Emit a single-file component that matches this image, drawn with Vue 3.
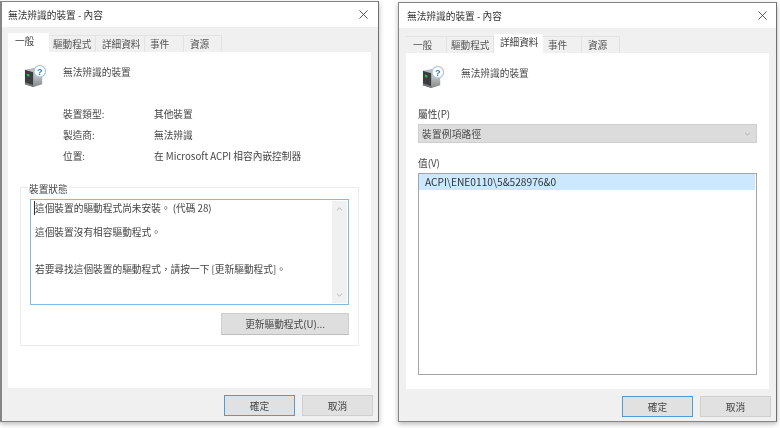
<script setup>
const tabs = ['一般', '驅動程式', '詳細資料', '事件', '資源']
const rows = [
  ['裝置類型:', '其他裝置'],
  ['製造商:', '無法辨識'],
  ['位置:', '在 Microsoft ACPI 相容內嵌控制器'],
]
</script>

<template>
  <div class="desk" lang="zh-Hant">
    <section class="win win-left">
      <header class="title"><span>無法辨識的裝置 - 內容</span><svg class="x" viewBox="0 0 10 10"><path d="M.5.5l9 9M9.5.5l-9 9" /></svg></header>
      <div class="body">
        <nav class="tabs">
          <span v-for="(t, i) in tabs" :key="t" class="tab" :class="[`t${i}`, { on: i === 0 }]">{{ t }}</span>
        </nav>
        <main class="panel panel-a">
          <div class="head">
            <svg class="dev" viewBox="0 0 24 24">
              <defs>
                <linearGradient id="sideA" x1="0" y1="0" x2="0" y2="1"><stop offset="0" stop-color="#dfe1e3" /><stop offset="1" stop-color="#85888b" /></linearGradient>
              </defs>
              <path d="M1 5L10 3l9 2-9 2.5z" fill="#b9bcbe" />
              <path d="M1 5l9 2.5V23l-9-3z" fill="#3b3d40" />
              <path d="M10 7.5L19 5v15l-9 3z" fill="url(#sideA)" />
              <path d="M3 9l2.6.7v2.5L3 11.5z" fill="#22c24a" />
              <path d="M1 18l9 3v2l-9-3z" fill="#77797c" />
              <circle cx="16.5" cy="6.5" r="6" fill="#fff" stroke="#a8c2da" stroke-width="1.1" />
              <text x="16.5" y="10" class="q">?</text>
            </svg>
            <span>無法辨識的裝置</span>
          </div>
          <dl class="props">
            <div v-for="r in rows" :key="r[0]" class="prop"><dt>{{ r[0] }}</dt><dd>{{ r[1] }}</dd></div>
          </dl>
          <div class="group">
            <span class="legend">裝置狀態</span>
            <div class="status">
              <div class="status-text">
                <p class="l1"><i class="caret"></i>這個裝置的驅動程式尚未安裝。&nbsp;(代碼 28)</p>
                <p class="l2">這個裝置沒有相容驅動程式。</p>
                <p class="l3">若要尋找這個裝置的驅動程式，請按一下 [更新驅動程式]。</p>
              </div>
              <div class="scroll">
                <svg viewBox="0 0 8 5"><path d="M1 4l3-3 3 3" /></svg>
                <svg viewBox="0 0 8 5"><path d="M1 1l3 3 3-3" /></svg>
              </div>
            </div>
            <div class="update-row"><button class="btn update">更新驅動程式(U)...</button></div>
          </div>
        </main>
        <footer class="foot">
          <button class="btn ok">確定</button>
          <button class="btn">取消</button>
        </footer>
      </div>
    </section>

    <section class="win win-right">
      <header class="title"><span>無法辨識的裝置 - 內容</span><svg class="x" viewBox="0 0 10 10"><path d="M.5.5l9 9M9.5.5l-9 9" /></svg></header>
      <div class="body">
        <nav class="tabs">
          <span v-for="(t, i) in tabs" :key="t" class="tab" :class="[`t${i}`, { on: i === 2 }]">{{ t }}</span>
        </nav>
        <main class="panel panel-b">
          <div class="head">
            <svg class="dev" viewBox="0 0 24 24">
              <defs>
                <linearGradient id="sideB" x1="0" y1="0" x2="0" y2="1"><stop offset="0" stop-color="#dfe1e3" /><stop offset="1" stop-color="#85888b" /></linearGradient>
              </defs>
              <path d="M1 5L10 3l9 2-9 2.5z" fill="#b9bcbe" />
              <path d="M1 5l9 2.5V23l-9-3z" fill="#3b3d40" />
              <path d="M10 7.5L19 5v15l-9 3z" fill="url(#sideB)" />
              <path d="M3 9l2.6.7v2.5L3 11.5z" fill="#22c24a" />
              <path d="M1 18l9 3v2l-9-3z" fill="#77797c" />
              <circle cx="16.5" cy="6.5" r="6" fill="#fff" stroke="#a8c2da" stroke-width="1.1" />
              <text x="16.5" y="10" class="q">?</text>
            </svg>
            <span>無法辨識的裝置</span>
          </div>
          <label class="lab lab-p">屬性(P)</label>
          <div class="combo"><span>裝置例項路徑</span><svg viewBox="0 0 8 5"><path d="M1 1l3 3 3-3" /></svg></div>
          <label class="lab lab-v">值(V)</label>
          <div class="list"><div class="sel">ACPI\ENE0110\5&amp;528976&amp;0</div></div>
        </main>
        <footer class="foot">
          <button class="btn ok">確定</button>
          <button class="btn">取消</button>
        </footer>
      </div>
    </section>
  </div>
</template>

<style>
html, body { margin: 0; background: #fff; }
</style>

<style scoped>
.desk {
  width: 780px; height: 428px; overflow: hidden; display: flex; align-items: flex-start;
  font-family: "Noto Sans CJK TC", "Liberation Sans", sans-serif; font-size: 9.7px; color: #444;
  background: #fff; filter: blur(.35px);
}
.win {
  box-sizing: border-box; width: 379px; display: flex; flex-direction: column;
  background: #f0f0f0; border: 1px solid #858585; border-right-color: #6e6e6e;
  box-shadow: 0 2px 5px rgba(0, 0, 0, .28);
}
.win-left { margin-top: 1px; height: 421px; border-left-width: 2px; }
.win-right { margin: 2px 0 0 19px; height: 420px; }
.title {
  flex: none; height: 25px; background: #fff; display: flex; align-items: center; justify-content: space-between;
  padding: 0 10px 0 6px; color: #333;
}
.win-right .title { padding: 0 9px 0 8px; }
.x { width: 9px; height: 9px; fill: none; stroke: #333; stroke-width: .9; }
.body { flex: 1; display: flex; flex-direction: column; padding: 7px 7px 5px 6px; min-height: 0; }
.win-right .body { padding: 7px 7px 4px 7px; }
.tabs { flex: none; height: 18px; display: flex; align-items: flex-end; color: #555; }
.tab {
  box-sizing: border-box; height: 17px; background: #f0f0f0; border: 1px solid #e3e3e3; border-bottom: 0; border-left: 0;
  display: flex; align-items: center; white-space: nowrap; letter-spacing: -.1px;
}
.t0 { width: 41px; padding-left: 7px; }
.t1 { width: 47px; padding-left: 4px; }
.t2 { width: 49px; padding-left: 6px; }
.t3 { width: 39px; padding-left: 5px; }
.t4 { width: 38px; padding-left: 6px; }
.tab.on { height: 19px; background: #fff; border: 0; color: #444; align-items: flex-start; padding-top: 1px; }
.panel { flex: 1; background: #fff; min-height: 0; box-sizing: border-box; padding: 13px 12px 0; display: flex; flex-direction: column; }
.head { display: flex; align-items: flex-start; height: 23px; padding-left: 4px; line-height: 14px; color: #4a4a4a; }
.head span { margin-left: 16px; }
.dev { width: 23px; height: 23px; flex: none; overflow: visible; }
.q { font: bold 9.5px "Liberation Sans", sans-serif; fill: #2f7fd3; text-anchor: middle; }
.props { margin: 19px 0 0 43px; display: flex; flex-direction: column; gap: 7px; }
.prop { display: flex; height: 14px; line-height: 14px; }
.prop dt { width: 91px; }
.prop dd { margin: 0; }
.group {
  position: relative; box-sizing: border-box; margin-top: 24px; width: 339px; height: 159px;
  border: 1px solid #ececec; padding: 11px 9px 0 9px;
}
.legend { position: absolute; left: 7px; top: -6px; background: #fff; padding: 0 1px; line-height: 14px; }
.status {
  box-sizing: border-box; height: 106px; border: 1px solid #84b9e4; display: flex; justify-content: space-between; padding: 1px;
}
.status-text { padding: 0 0 0 3px; line-height: 14px; color: #444; }
.status-text p { margin: 0; white-space: nowrap; position: relative; }
.l2 { margin-top: 10px !important; }
.l3 { margin-top: 23px !important; }
.caret { position: absolute; left: -1px; top: 0; width: 1px; height: 14px; background: #333; }
.scroll { width: 15px; background: #f0f0f0; display: flex; flex-direction: column; justify-content: space-between; align-items: center; padding: 6px 0; }
.scroll svg, .combo svg { width: 7px; height: 4px; fill: none; stroke: #a9a9a9; stroke-width: 1; }
.update-row { display: flex; justify-content: flex-end; margin-top: 8px; }
.btn {
  box-sizing: border-box; width: 71px; height: 21px; padding: 0; border: 1px solid #cfcfcf; background: #e1e1e1;
  font: inherit; color: #444; display: flex; align-items: center; justify-content: center;
}
.update { width: 128px; height: 22px; background: #dedede; border-bottom-color: #bdbdbd; }
.foot { flex: none; display: flex; justify-content: flex-end; gap: 7px; padding-top: 7px; height: 28px; box-sizing: border-box; margin-right: -2px; }
.ok { border: 1px solid #4f9ad8; }
.lab { display: block; line-height: 14px; color: #444; }
.lab-p { margin-top: 18px; }
.lab-v { margin-top: 13px; }
.combo {
  box-sizing: border-box; width: 339px; height: 19px; margin-top: 3px; background: #dcdcdc; border: 1px solid #cfcfcf;
  display: flex; align-items: center; justify-content: space-between; padding: 0 5px 0 3px; color: #4a4a4a; letter-spacing: .2px;
}
.list {
  box-sizing: border-box; width: 339px; height: 202px; margin-top: 3px; border: 1px solid #a4a4a4; background: #fff; padding: 0 1px 0 0;
}
.sel { height: 16px; line-height: 16px; background: #cce8ff; padding-left: 6px; font-size: 10.2px; color: #333; white-space: nowrap; }
</style>
